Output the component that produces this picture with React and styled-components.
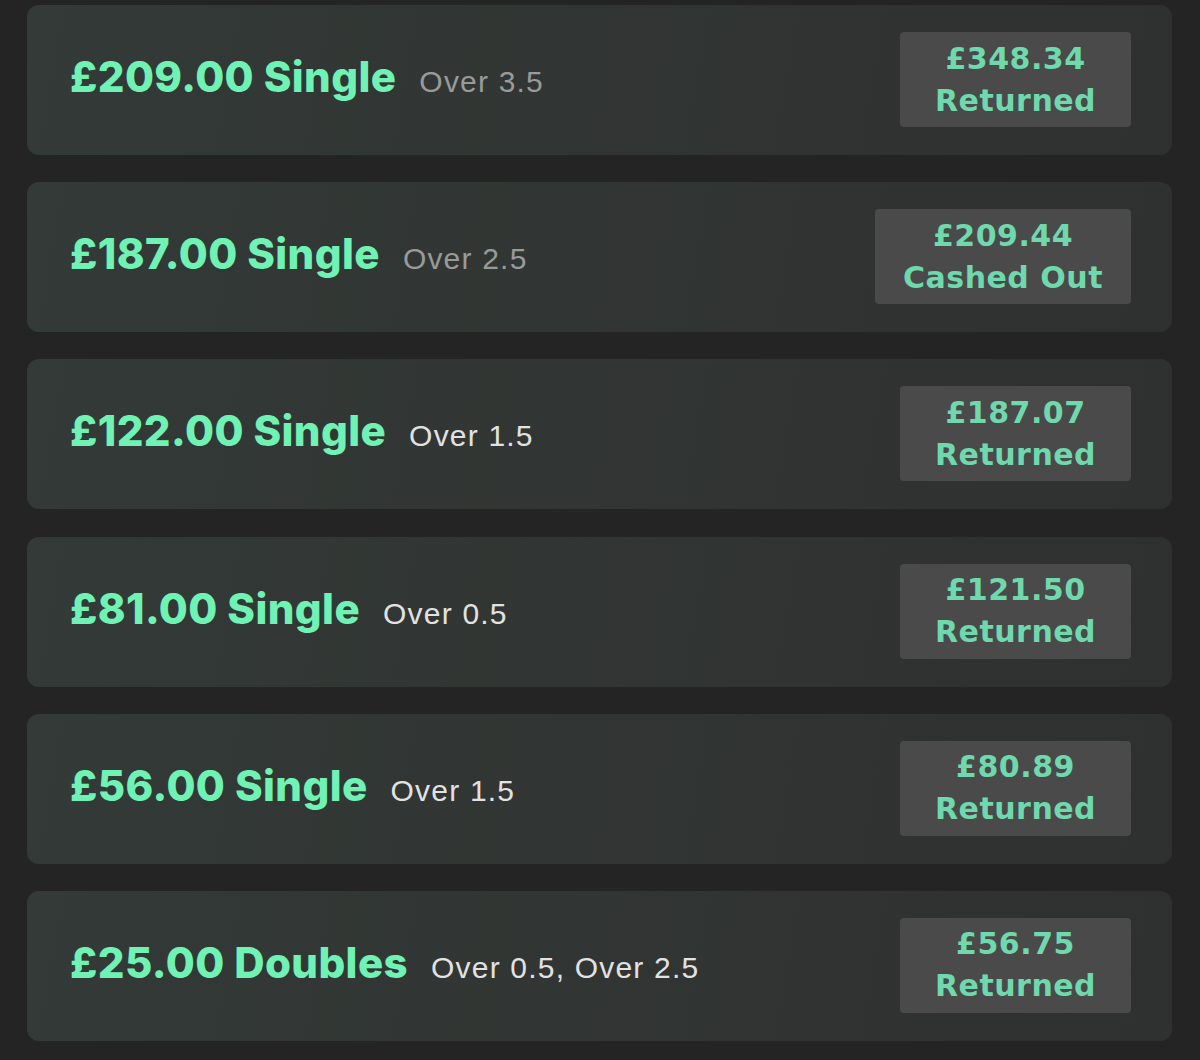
import React from 'react';
import styled, { createGlobalStyle } from 'styled-components';

const bets = [
  { stake: '£209.00', type: 'Single', market: 'Over 3.5', muted: true, amount: '£348.34', status: 'Returned' },
  { stake: '£187.00', type: 'Single', market: 'Over 2.5', muted: true, amount: '£209.44', status: 'Cashed Out' },
  { stake: '£122.00', type: 'Single', market: 'Over 1.5', amount: '£187.07', status: 'Returned' },
  { stake: '£81.00', type: 'Single', market: 'Over 0.5', amount: '£121.50', status: 'Returned' },
  { stake: '£56.00', type: 'Single', market: 'Over 1.5', amount: '£80.89', status: 'Returned' },
  { stake: '£25.00', type: 'Doubles', market: 'Over 0.5, Over 2.5', amount: '£56.75', status: 'Returned' },
];

const GlobalStyle = createGlobalStyle`
  body {
    margin: 0;
    background: #242424;
  }
`;

const List = styled.div`
  display: flex;
  flex-direction: column;
  gap: 27.2px;
  padding: 5px 28px 0 27px;
`;

const Card = styled.div`
  display: flex;
  align-items: center;
  justify-content: space-between;
  height: 150px;
  box-sizing: border-box;
  padding: 0 41px 0 43px;
  border-radius: 12px;
  background: linear-gradient(100deg, #333a37 0%, #313533 50%, #2f3030 100%);
`;

const Info = styled.div`
  display: flex;
  align-items: baseline;
  gap: 23px;
  padding-bottom: 7px;
`;

const Title = styled.span`
  font-family: Inter, Roboto, sans-serif;
  font-weight: 800;
  font-size: 42px;
  color: #6ff2b4;
  letter-spacing: 0.4px;
`;

const Market = styled.span`
  font-family: 'Liberation Sans', Arial, sans-serif;
  font-size: 30px;
  letter-spacing: 1.2px;
  color: ${(props) => (props.muted ? '#999a9a' : '#e2e2e2')};
`;

const Status = styled.div`
  display: flex;
  flex-direction: column;
  align-items: center;
  justify-content: center;
  min-width: 231px;
  height: 95px;
  box-sizing: border-box;
  padding: 0 28px;
  margin-bottom: 1px;
  border-radius: 4px;
  background: #4a4a4a;
  font-family: 'DejaVu Sans', sans-serif;
  font-weight: bold;
  font-size: 30px;
  line-height: 42px;
  letter-spacing: 0.5px;
  color: #6fd8ad;
`;

const App = () => (
  <>
    <GlobalStyle />
    <List>
      {bets.map((bet) => (
        <Card key={bet.stake}>
          <Info>
            <Title>
              {bet.stake} {bet.type}
            </Title>
            <Market muted={bet.muted}>{bet.market}</Market>
          </Info>
          <Status>
            <span>{bet.amount}</span>
            <span>{bet.status}</span>
          </Status>
        </Card>
      ))}
    </List>
  </>
);

export default App;
